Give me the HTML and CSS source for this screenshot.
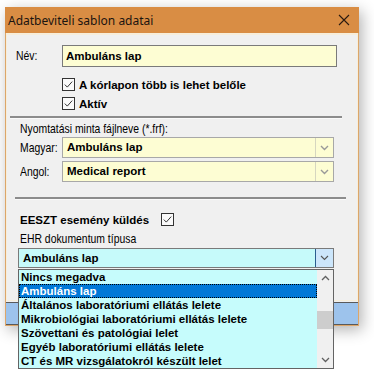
FILE: index.html
```html
<!DOCTYPE html>
<html lang="hu">

<head>
  <meta charset="UTF-8">
  <title>Adatbeviteli sablon adatai</title>
  <link rel="stylesheet" href="styles.css">
</head>

<body>
  <div class="window">
    <div class="titlebar">
      <span class="title">Adatbeviteli sablon adatai</span>
      <svg class="close" width="12" height="12" viewBox="0 0 12 12">
        <path d="M1 1 L11 11 M11 1 L1 11" stroke="#2a1a10" stroke-width="1.1" fill="none" />
      </svg>
    </div>

    <div class="client">
      <!-- név -->
      <div class="name-row">
        <span class="label name-label"><span class="narrow">Név:</span></span>
        <div class="field name-field">Ambuláns lap</div>
      </div>

      <div class="checks">
        <label class="check-row">
          <svg class="checkbox" width="13" height="13" viewBox="0 0 13 13">
            <rect x="0.5" y="0.5" width="12" height="12" fill="#fafafa" stroke="#333" />
            <path d="M2.8 6.6 L5.3 9.1 L10.2 3.6" stroke="#333" stroke-width="1" fill="none" />
          </svg>
          <span class="bold">A kórlapon több is lehet belőle</span>
        </label>
        <label class="check-row">
          <svg class="checkbox" width="13" height="13" viewBox="0 0 13 13">
            <rect x="0.5" y="0.5" width="12" height="12" fill="#fafafa" stroke="#333" />
            <path d="M2.8 6.6 L5.3 9.1 L10.2 3.6" stroke="#333" stroke-width="1" fill="none" />
          </svg>
          <span class="bold">Aktív</span>
        </label>
      </div>

      <div class="sep sep-1"></div>

      <!-- nyomtatási minta -->
      <div class="print-group">
        <div class="label"><span class="narrow">Nyomtatási minta fájlneve (*.frf):</span></div>
        <div class="combo-row">
          <span class="label combo-label"><span class="narrow">Magyar:</span></span>
          <div class="combo yellow">
            <span class="combo-text">Ambuláns lap</span>
            <span class="combo-btn">
              <svg width="9" height="6" viewBox="0 0 9 6">
                <path d="M1 1 L4.5 4.5 L8 1" stroke="#999" stroke-width="1.4" fill="none" />
              </svg>
            </span>
          </div>
        </div>
        <div class="combo-row">
          <span class="label combo-label"><span class="narrow">Angol:</span></span>
          <div class="combo yellow">
            <span class="combo-text">Medical report</span>
            <span class="combo-btn">
              <svg width="9" height="6" viewBox="0 0 9 6">
                <path d="M1 1 L4.5 4.5 L8 1" stroke="#999" stroke-width="1.4" fill="none" />
              </svg>
            </span>
          </div>
        </div>
      </div>

      <div class="sep sep-2"></div>

      <!-- EESZT -->
      <div class="eeszt-row">
        <span class="bold eeszt-label">EESZT esemény küldés</span>
        <svg class="checkbox" width="13" height="13" viewBox="0 0 13 13">
          <rect x="0.5" y="0.5" width="12" height="12" fill="#fafafa" stroke="#333" />
          <path d="M2.8 6.6 L5.3 9.1 L10.2 3.6" stroke="#333" stroke-width="1" fill="none" />
        </svg>
      </div>

      <div class="label ehr-label"><span class="narrow">EHR dokumentum típusa</span></div>

      <div class="combo cyan ehr-combo">
        <span class="combo-text">Ambuláns lap</span>
        <span class="combo-btn">
          <svg width="9" height="6" viewBox="0 0 9 6">
            <path d="M1 1 L4.5 4.5 L8 1" stroke="#555" stroke-width="1.1" fill="none" />
          </svg>
        </span>

        <!-- lenyíló lista -->
        <div class="dropdown">
          <ul class="options">
            <li>Nincs megadva</li>
            <li class="selected">Ambuláns lap</li>
            <li>Általános laboratóriumi ellátás lelete</li>
            <li>Mikrobiológiai laboratóriumi ellátás lelete</li>
            <li>Szövettani és patológiai lelet</li>
            <li>Egyéb laboratóriumi ellátás lelete</li>
            <li>CT és MR vizsgálatokról készült lelet</li>
          </ul>
          <div class="scrollbar">
            <svg class="arrow" width="9" height="6" viewBox="0 0 9 6">
              <path d="M1 5 L4.5 1.5 L8 5" stroke="#606060" stroke-width="1.3" fill="none" />
            </svg>
            <div class="track">
              <div class="thumb"></div>
            </div>
            <svg class="arrow" width="9" height="6" viewBox="0 0 9 6">
              <path d="M1 1 L4.5 4.5 L8 1" stroke="#606060" stroke-width="1.3" fill="none" />
            </svg>
          </div>
        </div>
      </div>
    </div>

    <div class="bottom-bar"></div>
  </div>
</body>

</html>
```

FILE: styles.css
```css
* {
  margin: 0;
  padding: 0;
  box-sizing: border-box;
}

body {
  min-height: 100vh;
  background-color: #fff;
  font-family: "Liberation Sans", Arial, sans-serif;
  color: #000;
  overflow: hidden;
}

.window {
  position: relative;
  margin: 7px 0 0 5px;
  width: 354px;
  background-color: #f0f0f0;
  border: 1px solid #dca66a;
  border-top: none;
  box-shadow: 3px 4px 14px rgba(0, 0, 0, 0.3);
}

.titlebar {
  height: 26px;
  background-color: #d98d44;
  display: flex;
  align-items: center;
  justify-content: space-between;
  padding: 0 9px 0 3px;
  margin: 0 -1px;
}

.title {
  font-family: "Noto Sans", "Open Sans", sans-serif;
  font-size: 12px;
  color: #1b1410;
}

.close {
  display: block;
}

.client {
  border: 1px solid #f7eedb;
  border-top-width: 2px;
  padding-bottom: 32px;
}

.label {
  font-size: 13px;
  line-height: 14px;
  white-space: nowrap;
}

/* schmaler Systemfont nachgebildet */
.narrow {
  display: inline-block;
  transform: scaleX(0.8);
  transform-origin: left center;
}

.bold {
  font-weight: bold;
  font-size: 11.5px;
}

.name-row {
  display: flex;
  align-items: center;
  padding: 10px 0 0 9px;
}

.name-label {
  width: 46px;
}

.field {
  height: 22px;
  border: 1px solid #7a7a7a;
  background-color: #fdfdd3;
  font-weight: bold;
  font-size: 11.5px;
  line-height: 20px;
  padding-left: 3px;
}

.name-field {
  width: 275px;
}

.checks {
  display: flex;
  flex-direction: column;
  gap: 6px;
  padding: 11px 0 0 55px;
}

.check-row {
  display: flex;
  align-items: center;
  gap: 4px;
  height: 13px;
}

.checkbox {
  display: block;
  flex-shrink: 0;
}

.sep {
  height: 2px;
  background-color: #8c8c8c;
  border-bottom: 1px solid #fafafa;
  box-sizing: content-box;
}

.sep-1 {
  margin: 6px 0 0 3px;
  width: 332px;
}

.sep-2 {
  margin: 15px 0 0 8px;
  width: 331px;
}

.print-group {
  padding: 3px 0 0 13px;
  display: flex;
  flex-direction: column;
  gap: 3px;
}

.print-group > .label {
  margin-bottom: -2px;
}

.combo-row {
  display: flex;
  align-items: center;
}

.combo-label {
  width: 42px;
}

.combo {
  position: relative;
  display: flex;
  width: 272px;
  height: 21px;
  border: 1px solid #a8a8a8;
}

.combo.yellow {
  background-color: #fdfdd3;
}

.combo-text {
  flex: 1;
  font-weight: bold;
  font-size: 11.5px;
  line-height: 19px;
  padding-left: 4px;
}

.combo-btn {
  width: 18px;
  border-left: 1px solid #d6d6c0;
  display: flex;
  align-items: center;
  justify-content: center;
}

.combo-btn svg {
  display: block;
}

.eeszt-row {
  display: flex;
  align-items: center;
  padding: 13px 0 0 13px;
}

.eeszt-label {
  width: 141px;
}

.ehr-label {
  padding: 6px 0 0 13px;
}

.combo.cyan {
  margin: 2px 0 0 11px;
  width: 316px;
  height: 20px;
  background-color: #c6fafa;
  border-color: #7a7a7a;
}

.ehr-combo .combo-text {
  line-height: 18px;
}

.ehr-combo .combo-btn {
  background-color: #cce6fb;
  border-left: 1px solid #2a5d8f;
}

.dropdown {
  position: absolute;
  top: 20px;
  left: -1px;
  width: 316px;
  height: 100px;
  border: 1px solid #646464;
  background-color: #c6fcfc;
  display: flex;
  z-index: 2;
}

.options {
  list-style: none;
  flex: 1;
}

.options li {
  height: 14px;
  font-weight: bold;
  font-size: 11.5px;
  line-height: 14px;
  padding-left: 2px;
  white-space: nowrap;
}

.options li.selected {
  background-color: #0078d7;
  color: #fff;
  outline: 1px dotted #000;
  outline-offset: -1px;
}

.scrollbar {
  width: 16px;
  background-color: #f0f0f0;
  display: flex;
  flex-direction: column;
  align-items: center;
  padding: 5px 0 5px;
}

.scrollbar .arrow {
  display: block;
}

.track {
  flex: 1;
  width: 100%;
  padding-top: 30px;
}

.thumb {
  height: 18px;
  background-color: #cdcdcd;
}

.bottom-bar {
  height: 23px;
  margin-top: 1px;
  background-color: #9dc3ec;
  border-top: 1px solid #5a5a5a;
  border-bottom: 1px solid #5a5a5a;
}
```
